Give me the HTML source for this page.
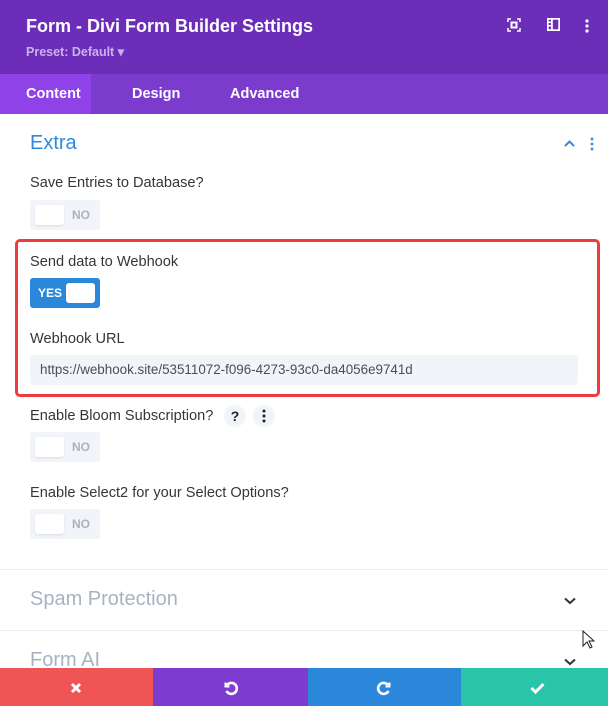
<!DOCTYPE html>
<html><head><meta charset="utf-8"><style>
*{margin:0;padding:0;box-sizing:border-box}
body{width:608px;height:706px;overflow:hidden;background:#fff;font-family:"Liberation Sans",sans-serif;position:relative}
.hdr{position:absolute;left:0;top:0;width:608px;height:74px;background:#6c2eb9}
.title{position:absolute;left:26px;top:16px;color:#fff;font-size:18px;font-weight:bold}
.preset{position:absolute;left:26px;top:44px;color:#c9b3ea;font-size:12.5px;font-weight:bold}
.tabs{position:absolute;left:0;top:74px;width:608px;height:40px;background:#7b3ccd}
.tab{position:absolute;top:0;height:40px;line-height:40px;color:#fff;font-size:14.5px;font-weight:bold}
.lbl{position:absolute;left:30px;color:#32373c;font-size:14.6px}
.tog{position:absolute;left:30px;width:70px;height:30px;background:#f1f4f8;border-radius:3px}
.tog .k{position:absolute;left:5px;top:5px;width:29px;height:20px;background:#fff;border-radius:3px;box-shadow:0 1px 2px rgba(0,0,0,.1)}
.tog .t{position:absolute;left:42px;top:8px;font-size:12px;font-weight:bold;color:#a9b3c0}
.sec{position:absolute;left:30px;color:#a8b3c1;font-size:20px}
.hr{position:absolute;left:0;width:608px;height:1px;background:#eceff3}
.chev{position:absolute;left:563px;width:14px;height:10px}
.ft{position:absolute;top:668px;height:38px}
</style></head><body>
<div class="hdr">
<div class="title">Form - Divi Form Builder Settings</div>
<div class="preset">Preset: Default ▾</div>
<svg style="position:absolute;left:507px;top:18px" width="14" height="14" viewBox="0 0 14 14" fill="none" stroke="#fff" stroke-width="1.5"><path d="M1 4V1h3M10 1h3v3M13 10v3h-3M4 13H1v-3"/><rect x="4.5" y="4.5" width="5" height="5" stroke-width="2"/></svg>
<svg style="position:absolute;left:547px;top:18px" width="13" height="13" viewBox="0 0 13 13"><rect x="0.8" y="0.8" width="11.4" height="11.4" fill="none" stroke="#fff" stroke-width="1.8"/><rect x="4" y="1" width="1.8" height="11" fill="#fff"/><rect x="1" y="3.5" width="3" height="1.5" fill="#fff"/><rect x="1" y="7" width="3" height="1.5" fill="#fff"/></svg>
<svg style="position:absolute;left:585px;top:19px" width="4" height="14" viewBox="0 0 4 14" fill="#fff"><circle cx="2" cy="2" r="1.6"/><circle cx="2" cy="7" r="1.6"/><circle cx="2" cy="12" r="1.6"/></svg>
</div>
<div class="tabs">
<div style="position:absolute;left:0;top:0;width:91px;height:40px;background:#8e42e8"></div>
<div class="tab" style="left:26px">Content</div>
<div class="tab" style="left:132px">Design</div>
<div class="tab" style="left:230px">Advanced</div>
</div>
<div style="position:absolute;left:30px;top:132px;color:#2e8ae0;font-size:20px">Extra</div>
<svg style="position:absolute;left:563px;top:139px" width="13" height="9" viewBox="0 0 13 9"><path d="M2 7l4.5-4.5L11 7" fill="none" stroke="#2e8ae0" stroke-width="2"/></svg>
<svg style="position:absolute;left:590px;top:137px" width="4" height="14" viewBox="0 0 4 14" fill="#2e8ae0"><circle cx="2" cy="2" r="1.4"/><circle cx="2" cy="7" r="1.4"/><circle cx="2" cy="12" r="1.4"/></svg>

<div class="lbl" style="top:175px">Save Entries to Database?</div>
<div class="tog" style="top:200px"><div class="k"></div><div class="t">NO</div></div>

<div style="position:absolute;left:15px;top:239px;width:585px;height:158px;border:3px solid #ef3b3e;border-radius:5px"></div>
<div class="lbl" style="top:254px">Send data to Webhook</div>
<div style="position:absolute;left:30px;top:278px;width:70px;height:30px;background:#2b87da;border-radius:3px">
<div style="position:absolute;left:8px;top:8px;color:#fff;font-size:12px;font-weight:bold">YES</div>
<div style="position:absolute;left:36px;top:5px;width:29px;height:20px;background:#fff;border-radius:3px"></div></div>
<div class="lbl" style="top:331px">Webhook URL</div>
<div style="position:absolute;left:30px;top:355px;width:548px;height:30px;background:#f1f4f8;border-radius:3px;color:#4a4f55;font-size:13.4px;line-height:30px;padding-left:10px">https://webhook.site/53511072-f096-4273-93c0-da4056e9741d</div>

<div class="lbl" style="top:408px">Enable Bloom Subscription?</div>
<div style="position:absolute;left:224px;top:405px;width:22px;height:22px;border-radius:11px;background:#f1f4f8;text-align:center;line-height:22px;font-weight:bold;font-size:14px;color:#222">?</div>
<div style="position:absolute;left:253px;top:405px;width:22px;height:22px;border-radius:11px;background:#f1f4f8"></div>
<svg style="position:absolute;left:262px;top:409px" width="4" height="14" viewBox="0 0 4 14" fill="#222"><circle cx="2" cy="2" r="1.5"/><circle cx="2" cy="7" r="1.5"/><circle cx="2" cy="12" r="1.5"/></svg>
<div class="tog" style="top:432px"><div class="k"></div><div class="t">NO</div></div>

<div class="lbl" style="top:485px">Enable Select2 for your Select Options?</div>
<div class="tog" style="top:509px"><div class="k"></div><div class="t">NO</div></div>

<div class="hr" style="top:569px"></div>
<div class="sec" style="top:588px">Spam Protection</div>
<svg class="chev" style="top:596px" viewBox="0 0 14 10"><path d="M2 2.5l5 4.5 5-4.5" fill="none" stroke="#333" stroke-width="2"/></svg>
<div class="hr" style="top:630px"></div>
<div class="sec" style="top:649px">Form AI</div>
<svg class="chev" style="top:657px" viewBox="0 0 14 10"><path d="M2 2.5l5 4.5 5-4.5" fill="none" stroke="#333" stroke-width="2"/></svg>

<div class="ft" style="left:0;width:153px;background:#ef5555"></div>
<div class="ft" style="left:153px;width:155px;background:#7e3bd0"></div>
<div class="ft" style="left:308px;width:153px;background:#2b87da"></div>
<div class="ft" style="left:461px;width:147px;background:#29c4a9"></div>
<svg style="position:absolute;left:70px;top:682px" width="12" height="12" viewBox="0 0 12 12"><path d="M2 2l8 8M10 2l-8 8" stroke="#fff" stroke-width="3"/></svg>
<svg style="position:absolute;left:223px;top:680px" width="16" height="16" viewBox="0 0 16 16" fill="none" stroke="#fff" stroke-width="2.6"><path d="M4 5A5.5 5.5 0 1 1 3.5 11"/><path d="M2.5 2.5v4h4" stroke-width="2"/></svg>
<svg style="position:absolute;left:376px;top:680px" width="16" height="16" viewBox="0 0 16 16" fill="none" stroke="#fff" stroke-width="2.6"><path d="M12 5A5.5 5.5 0 1 0 12.5 11"/><path d="M13.5 2.5v4h-4" stroke-width="2"/></svg>
<svg style="position:absolute;left:530px;top:682px" width="15" height="12" viewBox="0 0 15 12"><path d="M1.5 6l4 4L13.5 2" fill="none" stroke="#fff" stroke-width="3"/></svg>
<svg style="position:absolute;left:582px;top:630px" width="13" height="20" viewBox="0 0 13 20"><path d="M1 1v15l4-4 3 6 2-1-3-6h5z" fill="#fff" stroke="#222" stroke-width="1"/></svg>
</body></html>
